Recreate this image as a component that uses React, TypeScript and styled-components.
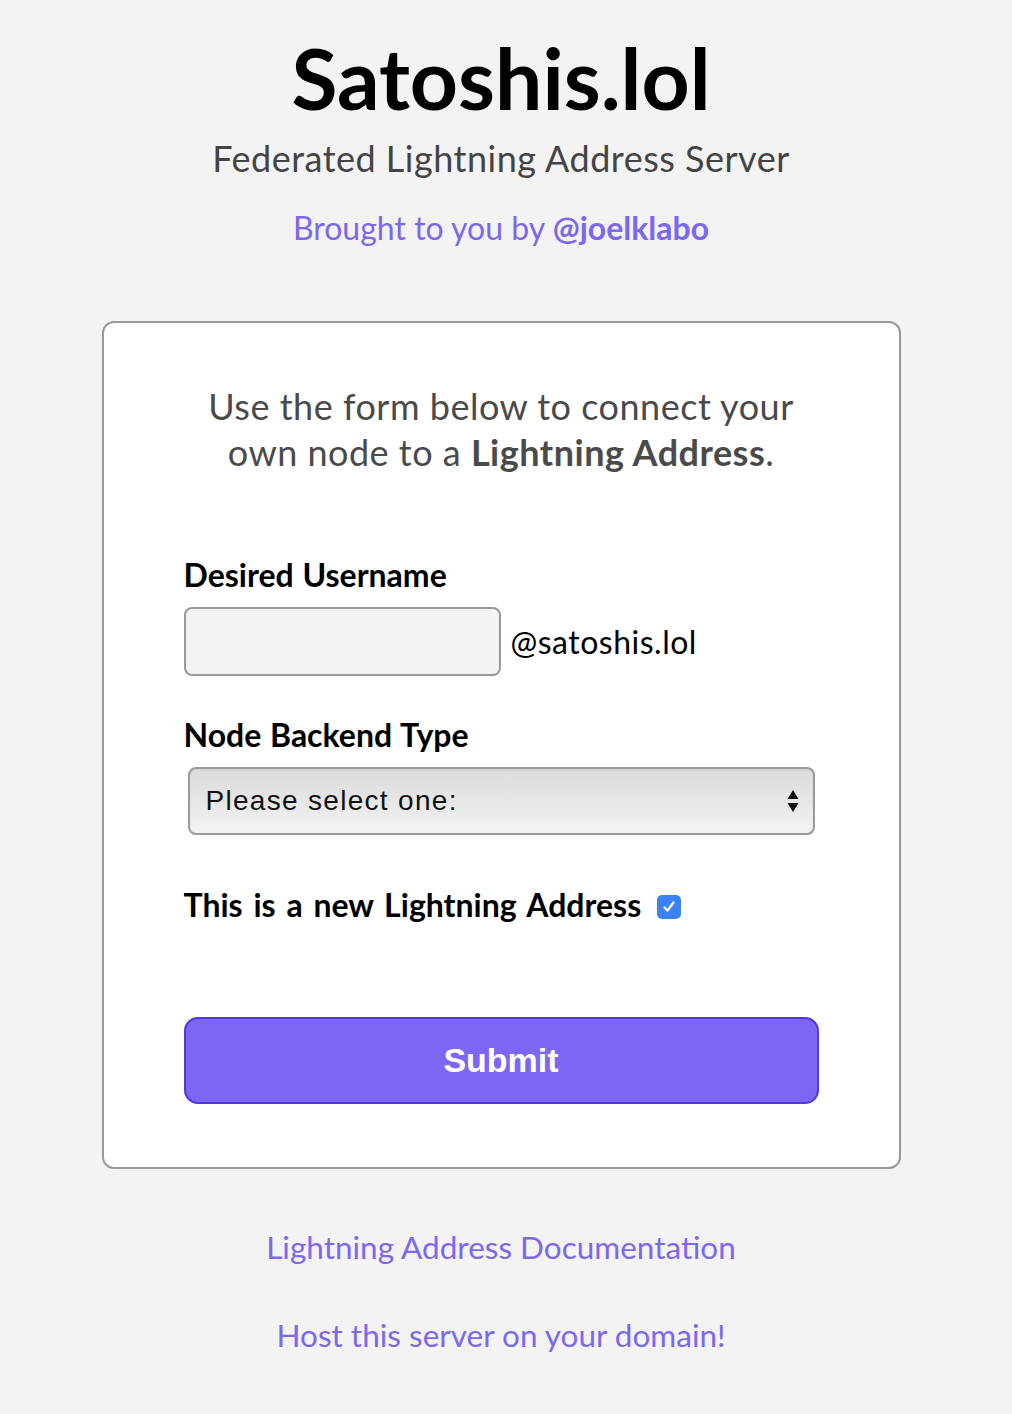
import React from "react";
import styled, { createGlobalStyle } from "styled-components";

const Global = createGlobalStyle`
  html, body { margin: 0; padding: 0; background: #f3f3f3; }
  body { font-family: Lato, "Noto Sans", sans-serif; color: #000; }
  * { box-sizing: border-box; }
`;

const Page = styled.div`
  display: flex;
  flex-direction: column;
  align-items: center;
  padding: 30px 10px 40px 0;
`;

const Title = styled.h1`
  margin: 0;
  font-size: 84px;
  line-height: 96px;
  font-weight: 700;
  color: #000;
`;

const Subtitle = styled.p`
  margin: 10px 0 0;
  font-size: 36px;
  line-height: 44px;
  color: #444;
  letter-spacing: 0.5px;
`;

const Link = styled.a<{ $bold?: boolean }>`
  color: #7b68ee;
  text-decoration: none;
  font-weight: ${(p) => (p.$bold ? 700 : 400)};
`;

const Byline = styled.p`
  margin: 28px 0 0;
  font-size: 32px;
  line-height: 40px;
  color: #7b68ee;
`;

const Card = styled.div`
  margin-top: 73px;
  width: 799px;
  background: #fff;
  border: 2px solid #999;
  border-radius: 12px;
  padding: 60px 80px 63px;
  display: flex;
  flex-direction: column;
`;

const Intro = styled.p`
  margin: 0 0 81px;
  text-align: center;
  font-size: 36px;
  line-height: 46px;
  color: #4a4a4a;
  letter-spacing: 0.5px;
  b { font-weight: 700; }
`;

const Label = styled.label<{ $wide?: boolean }>`
  display: block;
  font-size: 32px;
  line-height: 38px;
  font-weight: 700;
  word-spacing: ${(p) => (p.$wide ? 3 : 1)}px;
  color: #000;
`;

const Field = styled.div<{ $gap: number }>`
  display: flex;
  flex-direction: column;
  gap: 13px;
  margin-bottom: ${(p) => p.$gap}px;
`;

const InputRow = styled.div`
  display: flex;
  align-items: center;
  gap: 10px;
`;

const TextInput = styled.input`
  width: 317px;
  height: 69px;
  background: #f3f3f3;
  border: 2px solid #999;
  border-radius: 8px;
  font-size: 28px;
  padding: 0 12px;
  outline: none;
`;

const Domain = styled.span`
  font-size: 32px;
  letter-spacing: 0.5px;
  color: #000;
`;

const SelectBox = styled.div`
  margin-left: 4px;
  width: 627px;
  height: 68px;
  border: 2px solid #9a9a9a;
  border-radius: 8px;
  background: linear-gradient(#dcdcdc 0%, #e6e6e6 50%, #f3f3f3 100%);
  box-shadow: inset 0 1px 2px rgba(0, 0, 0, 0.08);
  display: flex;
  align-items: center;
  padding: 0 13px 0 16px;
  font-family: "Liberation Sans", Arial, sans-serif;
  font-size: 28px;
  letter-spacing: 1.3px;
  color: #111;
`;

const SelectText = styled.span`
  flex: 1;
`;

const Arrows = styled.svg`
  width: 14px;
  height: 28px;
`;

const CheckRow = styled.div`
  display: flex;
  align-items: center;
  gap: 16px;
`;

const CheckBox = styled.span`
  width: 24px;
  height: 24px;
  border-radius: 5px;
  background: #3b82f6;
  display: inline-flex;
  align-items: center;
  justify-content: center;
  margin-top: 4px;
`;

const Submit = styled.button`
  margin-top: 93px;
  width: 635px;
  height: 87px;
  background: #7b67f1;
  border: 2px solid #4f37e6;
  border-radius: 14px;
  color: #fff;
  font-family: "Liberation Sans", Arial, sans-serif;
  font-weight: 700;
  font-size: 34px;
  cursor: pointer;
`;

const Footer = styled.div`
  display: flex;
  flex-direction: column;
  align-items: center;
  gap: 50px;
  margin-top: 59px;
  font-size: 31.5px;
  line-height: 38px;
`;

export default function App() {
  return (
    <>
      <Global />
      <Page>
        <Title>Satoshis.lol</Title>
        <Subtitle>Federated Lightning Address Server</Subtitle>
        <Byline>
          Brought to you by <Link $bold href="#">@joelklabo</Link>
        </Byline>
        <Card>
          <Intro>
            Use the form below to connect your
            <br />
            own node to a <b>Lightning Address</b>.
          </Intro>
          <Field $gap={40}>
            <Label>Desired Username</Label>
            <InputRow>
              <TextInput type="text" />
              <Domain>@satoshis.lol</Domain>
            </InputRow>
          </Field>
          <Field $gap={51}>
            <Label>Node Backend Type</Label>
            <SelectBox>
              <SelectText>Please select one:</SelectText>
              <Arrows viewBox="0 0 14 28">
                <path d="M7 3 L12.5 12 L1.5 12 Z" fill="#111" />
                <path d="M7 25 L12.5 16 L1.5 16 Z" fill="#111" />
              </Arrows>
            </SelectBox>
          </Field>
          <CheckRow>
            <Label as="span" $wide>This is a new Lightning Address</Label>
            <CheckBox>
              <svg width="16" height="16" viewBox="0 0 16 16">
                <path d="M3.5 8.5 L6.5 11.5 L12.5 3.5" stroke="#fff" strokeWidth="2.2" fill="none" strokeLinecap="round" strokeLinejoin="round" />
              </svg>
            </CheckBox>
          </CheckRow>
          <Submit type="button">Submit</Submit>
        </Card>
        <Footer>
          <Link href="#">Lightning Address Documentation</Link>
          <Link href="#">Host this server on your domain!</Link>
        </Footer>
      </Page>
    </>
  );
}
